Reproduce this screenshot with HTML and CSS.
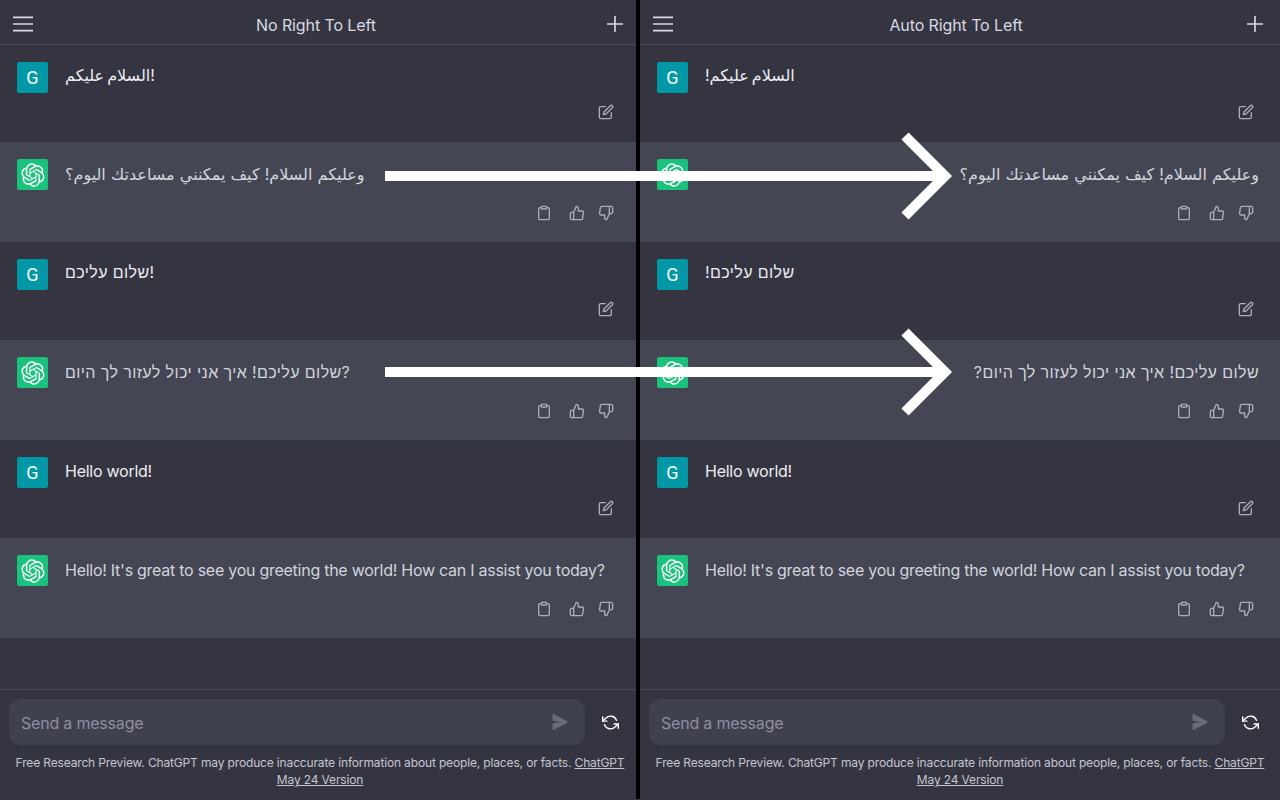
FILE: index.html
```html
<!DOCTYPE html>
<html>
<head>
    <title>No Right To Left / Auto Right To Left</title>
    <link rel="stylesheet" href="styles.css">
</head>
<body>
    <svg class="defs" width="0" height="0">
        <symbol id="logo" viewBox="0 0 41 41"><path fill="currentColor" d="M37.5324 16.8707C37.9808 15.5241 38.1363 14.0974 37.9886 12.6859C37.8409 11.2744 37.3934 9.91076 36.676 8.68622C35.6126 6.83404 33.9882 5.3676 32.0373 4.4985C30.0864 3.62941 27.9098 3.40259 25.8215 3.85078C24.8796 2.7893 23.7219 1.94125 22.4257 1.36341C21.1295 0.785575 19.7249 0.491269 18.3058 0.500197C16.1708 0.495044 14.0893 1.16803 12.3614 2.42214C10.6335 3.67624 9.34853 5.44666 8.6917 7.47815C7.30085 7.76286 5.98686 8.3414 4.8377 9.17505C3.68854 10.0087 2.73073 11.0782 2.02839 12.312C0.956464 14.1591 0.498905 16.2988 0.721698 18.4228C0.944492 20.5467 1.83612 22.5449 3.268 24.1293C2.81966 25.4759 2.66413 26.9026 2.81182 28.3141C2.95951 29.7256 3.40701 31.0892 4.12437 32.3138C5.18791 34.1659 6.8123 35.6322 8.76321 36.5013C10.7141 37.3704 12.8907 37.5973 14.9789 37.1492C15.9208 38.2107 17.0786 39.0587 18.3747 39.6366C19.6709 40.2144 21.0755 40.5087 22.4946 40.4998C24.6307 40.5054 26.7133 39.8321 28.4418 38.5772C30.1704 37.3223 31.4556 35.5506 32.1119 33.5179C33.5027 33.2332 34.8167 32.6547 35.9659 31.821C37.115 30.9874 38.0728 29.9178 38.7752 28.684C39.8458 26.8371 40.3023 24.6979 40.0789 22.5748C39.8556 20.4517 38.9639 18.4544 37.5324 16.8707ZM22.4978 37.8849C20.7443 37.8874 19.0459 37.2733 17.6994 36.1501C17.7601 36.117 17.8666 36.0586 17.936 36.0161L25.9004 31.4156C26.1003 31.3019 26.2663 31.137 26.3813 30.9378C26.4964 30.7386 26.5563 30.5124 26.5549 30.2825V19.0542L29.9213 20.998C29.9389 21.0068 29.9541 21.0198 29.9656 21.0359C29.977 21.052 29.9842 21.0707 29.9867 21.0902V30.3889C29.9842 32.375 29.1946 34.2791 27.7909 35.6841C26.3872 37.0892 24.4838 37.8806 22.4978 37.8849ZM6.39227 31.0064C5.51397 29.4888 5.19742 27.7107 5.49804 25.9832C5.55718 26.0187 5.66048 26.0818 5.73461 26.1244L13.699 30.7248C13.8975 30.8408 14.1233 30.902 14.3532 30.902C14.583 30.902 14.8088 30.8408 15.0073 30.7248L24.731 25.1103V28.9979C24.7321 29.0177 24.7283 29.0376 24.7199 29.0556C24.7115 29.0736 24.6988 29.0893 24.6829 29.1012L16.6317 33.7497C14.9096 34.7416 12.8643 35.0097 10.9447 34.4954C9.02506 33.9811 7.38785 32.7263 6.39227 31.0064ZM4.29707 13.6194C5.17156 12.0998 6.55279 10.9364 8.19885 10.3327C8.19885 10.4013 8.19491 10.5228 8.19491 10.6071V19.808C8.19351 20.0378 8.25334 20.2638 8.36823 20.4629C8.48312 20.6619 8.64893 20.8267 8.84863 20.9404L18.5723 26.5542L15.206 28.4979C15.1894 28.5089 15.1703 28.5155 15.1505 28.5173C15.1307 28.5191 15.1107 28.516 15.0924 28.5082L7.04025 23.8557C5.32135 22.8601 4.06748 21.2235 3.55369 19.3046C3.0399 17.3858 3.30794 15.3413 4.29707 13.6194ZM31.955 20.0556L22.2312 14.4411L25.5976 12.4981C25.6142 12.4872 25.6333 12.4805 25.6531 12.4787C25.6729 12.4769 25.6928 12.4801 25.7111 12.4879L33.7632 17.1364C34.9969 17.849 36.0019 18.8982 36.6599 20.1613C37.3179 21.4244 37.6018 22.849 37.4785 24.2678C37.3552 25.6867 36.8299 27.0407 35.9638 28.1717C35.0977 29.3027 33.9267 30.1641 32.5879 30.6548C32.5879 30.5854 32.5879 30.4639 32.5879 30.3796V21.1787C32.5893 20.9489 32.5303 20.7229 32.4154 20.5238C32.3005 20.3248 32.1347 20.16 31.935 20.0463ZM35.3054 15.0306C35.2463 14.9951 35.143 14.932 35.0689 14.8894L27.1045 10.289C26.906 10.173 26.6802 10.1118 26.4503 10.1118C26.2205 10.1118 25.9947 10.173 25.7962 10.289L16.0725 15.9035V12.0159C16.0714 11.9961 16.0752 11.9762 16.0836 11.9582C16.092 11.9402 16.1047 11.9245 16.1206 11.9126L24.1718 7.26006C25.4058 6.54995 26.8098 6.20387 28.2262 6.26229C29.6426 6.32071 31.0142 6.78095 32.1849 7.59201C33.3556 8.40307 34.2788 9.53247 34.8539 10.8504C35.429 12.1683 35.6309 13.6199 35.4372 15.0306ZM14.2724 21.9847L10.906 20.0409C10.8884 20.0321 10.8732 20.0191 10.8617 20.003C10.8503 19.9869 10.8431 19.9682 10.8406 19.9487V10.6499C10.8423 9.22531 11.2494 7.83009 12.0146 6.62828C12.7798 5.42647 13.8713 4.46757 15.1616 3.86352C16.4519 3.25947 17.8878 3.03512 19.3012 3.21673C20.7146 3.39835 22.047 3.97844 23.1431 4.88972C23.0824 4.92273 22.9769 4.98114 22.9065 5.02368L14.9421 9.62417C14.7421 9.73785 14.5761 9.90272 14.4611 10.1019C14.346 10.3011 14.2861 10.5273 14.2875 10.7572L14.2724 21.9847ZM16.0997 18.0413L20.4197 15.5464L24.7398 18.0399V23.0285L20.4197 25.5219L16.0997 23.0285V18.0413Z"/></symbol>
        <symbol id="edit" viewBox="0 0 24 24"><path d="M11 4H4a2 2 0 0 0-2 2v14a2 2 0 0 0 2 2h14a2 2 0 0 0 2-2v-7"/><path d="M18.5 2.5a2.121 2.121 0 0 1 3 3L12 15l-4 1 1-4 9.5-9.5z"/></symbol>
        <symbol id="copy" viewBox="0 0 24 24"><path d="M16 4h2a2 2 0 0 1 2 2v14a2 2 0 0 1-2 2H6a2 2 0 0 1-2-2V6a2 2 0 0 1 2-2h2"/><rect x="8" y="2" width="8" height="4" rx="1"/></symbol>
        <symbol id="up" viewBox="0 0 24 24"><path d="M14 9V5a3 3 0 0 0-3-3l-4 9v11h11.28a2 2 0 0 0 2-1.7l1.38-9a2 2 0 0 0-2-2.3zM7 22H4a2 2 0 0 1-2-2v-7a2 2 0 0 1 2-2h3"/></symbol>
        <symbol id="down" viewBox="0 0 24 24"><path d="M10 15v4a3 3 0 0 0 3 3l4-9V2H5.72a2 2 0 0 0-2 1.7l-1.38 9a2 2 0 0 0 2 2.3zm7-13h2.67A2.31 2.31 0 0 1 22 4v7a2.31 2.31 0 0 1-2.33 2H17"/></symbol>
        <symbol id="menu" viewBox="0 0 24 24"><path d="M2 5.3h20M2 12h20M2 18.7h20"/></symbol>
        <symbol id="plus" viewBox="0 0 24 24"><path d="M12 4v16M4 12h16"/></symbol>
        <symbol id="send" viewBox="0 0 16 16"><path fill="currentColor" d="M.5 1.163A1 1 0 0 1 1.97.28l12.868 6.837a1 1 0 0 1 0 1.766L1.969 15.72A1 1 0 0 1 .5 14.836V10.33a1 1 0 0 1 .816-.983L8.5 8 1.316 6.653A1 1 0 0 1 .5 5.67V1.163Z"/></symbol>
        <symbol id="regen" viewBox="0 0 24 24"><path d="M1 4v6h6M23 20v-6h-6"/><path d="M20.49 9A9 9 0 0 0 5.64 5.64L1 10m22 4l-4.64 4.36A9 9 0 0 1 3.51 15"/></symbol>
    </svg>

    <div class="split">
        <!-- left: text always left to right -->
        <section class="panel">
            <header class="topbar">
                <svg class="icon icon-menu"><use href="#menu"/></svg>
                <h1 class="title">No Right To Left</h1>
                <svg class="icon icon-plus"><use href="#plus"/></svg>
            </header>
            <div class="thread">
                <div class="row row-user">
                    <div class="avatar avatar-user">G</div>
                    <div class="body">
                        <p class="msg msg-user" lang="ar" dir="ltr">السلام عليكم!</p>
                        <div class="actions"><svg class="icon"><use href="#edit"/></svg></div>
                    </div>
                </div>
                <div class="row row-bot">
                    <div class="avatar avatar-bot"><svg class="logo"><use href="#logo"/></svg></div>
                    <div class="body">
                        <p class="msg" lang="ar" dir="ltr">وعليكم السلام! كيف يمكنني مساعدتك اليوم؟</p>
                        <div class="actions"><svg class="icon copy"><use href="#copy"/></svg><svg class="icon"><use href="#up"/></svg><svg class="icon"><use href="#down"/></svg></div>
                    </div>
                </div>
                <div class="row row-user">
                    <div class="avatar avatar-user">G</div>
                    <div class="body">
                        <p class="msg msg-user" lang="he" dir="ltr">שלום עליכם!</p>
                        <div class="actions"><svg class="icon"><use href="#edit"/></svg></div>
                    </div>
                </div>
                <div class="row row-bot">
                    <div class="avatar avatar-bot"><svg class="logo"><use href="#logo"/></svg></div>
                    <div class="body">
                        <p class="msg" lang="he" dir="ltr">שלום עליכם! איך אני יכול לעזור לך היום?</p>
                        <div class="actions"><svg class="icon copy"><use href="#copy"/></svg><svg class="icon"><use href="#up"/></svg><svg class="icon"><use href="#down"/></svg></div>
                    </div>
                </div>
                <div class="row row-user">
                    <div class="avatar avatar-user">G</div>
                    <div class="body">
                        <p class="msg msg-user" dir="ltr">Hello world!</p>
                        <div class="actions"><svg class="icon"><use href="#edit"/></svg></div>
                    </div>
                </div>
                <div class="row row-bot">
                    <div class="avatar avatar-bot"><svg class="logo"><use href="#logo"/></svg></div>
                    <div class="body">
                        <p class="msg" dir="ltr">Hello! It's great to see you greeting the world! How can I assist you today?</p>
                        <div class="actions"><svg class="icon copy"><use href="#copy"/></svg><svg class="icon"><use href="#up"/></svg><svg class="icon"><use href="#down"/></svg></div>
                    </div>
                </div>
            </div>
            <footer class="composer">
                <div class="input-row">
                    <div class="input">
                        <span class="placeholder">Send a message</span>
                        <svg class="send"><use href="#send"/></svg>
                    </div>
                    <svg class="icon icon-regen"><use href="#regen"/></svg>
                </div>
                <p class="note">Free Research Preview. ChatGPT may produce inaccurate information about people, places, or facts. <a href="#">ChatGPT</a> <a href="#">May 24 Version</a></p>
            </footer>
        </section>

        <!-- right: text direction detected per message -->
        <section class="panel">
            <header class="topbar">
                <svg class="icon icon-menu"><use href="#menu"/></svg>
                <h1 class="title">Auto Right To Left</h1>
                <svg class="icon icon-plus"><use href="#plus"/></svg>
            </header>
            <div class="thread">
                <div class="row row-user">
                    <div class="avatar avatar-user">G</div>
                    <div class="body">
                        <p class="msg msg-user" lang="ar" dir="auto">السلام عليكم!</p>
                        <div class="actions"><svg class="icon"><use href="#edit"/></svg></div>
                    </div>
                </div>
                <div class="row row-bot">
                    <div class="avatar avatar-bot"><svg class="logo"><use href="#logo"/></svg></div>
                    <div class="body">
                        <p class="msg" lang="ar" dir="auto">وعليكم السلام! كيف يمكنني مساعدتك اليوم؟</p>
                        <div class="actions"><svg class="icon copy"><use href="#copy"/></svg><svg class="icon"><use href="#up"/></svg><svg class="icon"><use href="#down"/></svg></div>
                    </div>
                </div>
                <div class="row row-user">
                    <div class="avatar avatar-user">G</div>
                    <div class="body">
                        <p class="msg msg-user" lang="he" dir="auto">שלום עליכם!</p>
                        <div class="actions"><svg class="icon"><use href="#edit"/></svg></div>
                    </div>
                </div>
                <div class="row row-bot">
                    <div class="avatar avatar-bot"><svg class="logo"><use href="#logo"/></svg></div>
                    <div class="body">
                        <p class="msg" lang="he" dir="auto">שלום עליכם! איך אני יכול לעזור לך היום?</p>
                        <div class="actions"><svg class="icon copy"><use href="#copy"/></svg><svg class="icon"><use href="#up"/></svg><svg class="icon"><use href="#down"/></svg></div>
                    </div>
                </div>
                <div class="row row-user">
                    <div class="avatar avatar-user">G</div>
                    <div class="body">
                        <p class="msg msg-user" dir="auto">Hello world!</p>
                        <div class="actions"><svg class="icon"><use href="#edit"/></svg></div>
                    </div>
                </div>
                <div class="row row-bot">
                    <div class="avatar avatar-bot"><svg class="logo"><use href="#logo"/></svg></div>
                    <div class="body">
                        <p class="msg" dir="auto">Hello! It's great to see you greeting the world! How can I assist you today?</p>
                        <div class="actions"><svg class="icon copy"><use href="#copy"/></svg><svg class="icon"><use href="#up"/></svg><svg class="icon"><use href="#down"/></svg></div>
                    </div>
                </div>
            </div>
            <footer class="composer">
                <div class="input-row">
                    <div class="input">
                        <span class="placeholder">Send a message</span>
                        <svg class="send"><use href="#send"/></svg>
                    </div>
                    <svg class="icon icon-regen"><use href="#regen"/></svg>
                </div>
                <p class="note">Free Research Preview. ChatGPT may produce inaccurate information about people, places, or facts. <a href="#">ChatGPT</a> <a href="#">May 24 Version</a></p>
            </footer>
        </section>

        <!-- annotation drawn over both panels -->
        <div class="divider"></div>
        <svg class="arrows" viewBox="0 0 1280 800">
            <path d="M385 176H945M905 136L945 176L905 216"/>
            <path d="M385 372H945M905 332L945 372L905 412"/>
        </svg>
    </div>
</body>
</html>
```

FILE: styles.css
```css
* {
    box-sizing: border-box;
}
html, body {
    margin: 0;
    height: 100%;
    overflow: hidden;
}
body {
    background-color: #343541;
    color: #ececf1;
    font-family: Inter, "Liberation Sans", "DejaVu Sans", sans-serif;
    font-size: 16px;
}
.defs {
    position: absolute;
}
.split {
    position: relative;
    display: flex;
    height: 800px;
}
.panel {
    display: flex;
    flex-direction: column;
    width: 640px;
    height: 800px;
}
.topbar {
    display: flex;
    align-items: center;
    height: 45px;
    padding: 3px 14px 0 11px;
    border-bottom: 1px solid #4d4e5a;
}
.title {
    flex: 1;
    margin: 3px 0 0;
    padding-right: 7px;
    font-size: 16px;
    font-weight: 400;
    text-align: center;
    color: #d9d9e3;
    letter-spacing: -0.1px;
}
.icon {
    display: block;
    width: 16px;
    height: 16px;
    fill: none;
    stroke: #acacbe;
    stroke-width: 2;
    stroke-linecap: round;
    stroke-linejoin: round;
}
.icon-menu {
    width: 24px;
    height: 24px;
    stroke: #d9d9e3;
    stroke-width: 1.7;
    stroke-linecap: butt;
}
.icon-plus {
    width: 22px;
    height: 22px;
    margin-top: 1px;
    stroke: #d9d9e3;
    stroke-width: 1.8;
}
.thread {
    flex: 1;
}
.row {
    display: flex;
    gap: 17px;
    padding: 17px 21px 0 17px;
}
.row-user {
    height: 98px;
}
.row-user:first-child {
    height: 97px;
}
.row-bot {
    height: 100px;
    background-color: #444654;
}
.avatar {
    flex: none;
    display: flex;
    align-items: center;
    justify-content: center;
    width: 31px;
    height: 31px;
    border-radius: 2px;
    color: #fff;
    font-family: Roboto, sans-serif;
    font-size: 18px;
}
.avatar-user {
    background-color: #0097a7;
}
.avatar-bot {
    background-color: #19c37d;
}
.logo {
    width: 24px;
    height: 24px;
    color: #fff;
}
.body {
    flex: 1;
    min-width: 0;
}
.msg {
    margin: 0;
    height: 28px;
    line-height: 28px;
    color: #d1d5db;
    letter-spacing: -0.26px;
}
.msg-user {
    width: fit-content;
    color: #ececf1;
}
.msg:lang(ar) {
    letter-spacing: 0;
    word-spacing: 0.7px;
}
.msg:lang(he) {
    letter-spacing: 0.4px;
}
.msg-user:lang(ar) {
    word-spacing: -1.5px;
    margin-top: -1px;
    margin-bottom: 1px;
}
.msg-user:lang(he) {
    margin-top: -1px;
    margin-bottom: 1px;
}
.row-bot .msg {
    margin-top: 1px;
    margin-bottom: -1px;
}
.actions {
    display: flex;
    justify-content: flex-end;
    gap: 13px;
    margin-top: 18px;
    margin-right: 5px;
}
.row-user .actions {
    margin-top: 15px;
}
.actions .copy {
    margin-right: 4px;
}
.composer {
    height: 111px;
    border-top: 1px solid #4d4e5a;
    padding: 9px 0 0 9px;
}
.input-row {
    display: flex;
    align-items: center;
    gap: 17px;
}
.input {
    display: flex;
    align-items: center;
    justify-content: space-between;
    width: 576px;
    height: 46px;
    padding: 0 17px 0 12px;
    border-radius: 12px;
    background-color: #40414f;
}
.placeholder {
    padding-top: 1px;
    color: #8e8ea0;
    letter-spacing: -0.2px;
}
.send {
    width: 16px;
    height: 16px;
    color: #6b6c7b;
}
.icon-regen {
    stroke: #fff;
    width: 17px;
    height: 17px;
}
.note {
    margin: 9px 0 0 -9px;
    padding: 0 14px;
    font-size: 12px;
    line-height: 17px;
    text-align: center;
    color: #c5c5d2;
    letter-spacing: -0.15px;
}
.note a {
    color: #c5c5d2;
}
.divider {
    position: absolute;
    left: 636px;
    top: 0;
    width: 4px;
    height: 799px;
    background-color: #000;
}
.arrows {
    position: absolute;
    left: 0;
    top: 0;
    width: 1280px;
    height: 800px;
    pointer-events: none;
    fill: none;
    stroke: #fff;
    stroke-width: 10;
}
```
